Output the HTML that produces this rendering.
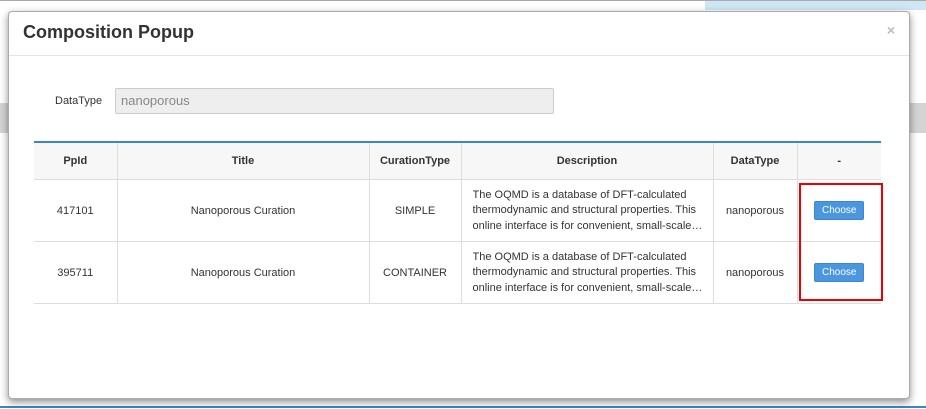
<!DOCTYPE html>
<html><head><style>
body{margin:0;width:926px;height:409px;overflow:hidden;background:#fff;font-family:"Liberation Sans",sans-serif;position:relative}
.bg{position:absolute}
.modal{position:absolute;left:8px;top:11px;width:900px;height:386px;background:#fff;border:1px solid #aaa;border-radius:4px;box-shadow:0 3px 8px rgba(0,0,0,.45)}
.hdr{height:43px;border-bottom:1px solid #e5e5e5;position:relative}
.hdr h4{margin:0;position:absolute;left:14px;top:10px;font-size:18px;font-weight:bold;color:#333}
.x{position:absolute;right:14px;top:10px;color:#bbb;font-size:14px;font-weight:bold}
.lbl{position:absolute;left:46px;top:83px;font-size:11px;color:#333}
.inp{position:absolute;left:106px;top:76px;height:26px;background:#eee;border:1px solid #ccc;border-radius:2px;font-size:13px;color:#888;line-height:24px;padding-left:5px;box-sizing:border-box;width:439px}
table{position:absolute;left:25px;top:129px;width:847px;table-layout:fixed;border-collapse:collapse;font-size:11px;color:#333;border-top:2px solid #3a87c8}
th{background:#f7f7f7;height:36px;font-weight:bold;border-right:1px solid #ddd;border-bottom:1px solid #ddd;padding:0}
td{height:61px;text-align:center;border-right:1px solid #ddd;border-bottom:1px solid #ddd;padding:0}
th:last-child,td:last-child{border-right:none}
td.d{text-align:left;padding:0 11px}
td.d div{line-height:15.5px;height:46px;overflow:hidden;white-space:nowrap}
.btn{display:inline-block;background:#4a97e0;color:#fff;font-size:10px;padding:3px 7px;border-radius:2px;border:1px solid #3c87cc}
.red{position:absolute;left:790px;top:171px;width:80px;height:114px;border:2px solid #e00}
</style></head><body>
<div class="bg" style="left:705px;top:0;width:221px;height:10px;background:#cfe6f5"></div>
<div class="bg" style="left:0;top:0;width:926px;height:1px;background:#aaa"></div>
<div class="bg" style="left:0;top:103px;width:926px;height:30px;background:#d4d4d4"></div>
<div class="bg" style="left:0;top:406px;width:926px;height:2px;background:#3a87c8"></div>
<div class="modal">
<div class="hdr"><h4>Composition Popup</h4><span class="x">×</span></div>
<div class="lbl">DataType</div>
<div class="inp">nanoporous</div>
<table>
<colgroup><col style="width:83px"><col style="width:252px"><col style="width:92px"><col style="width:252px"><col style="width:84px"><col style="width:84px"></colgroup>
<tr><th>PpId</th><th>Title</th><th>CurationType</th><th>Description</th><th>DataType</th><th>-</th></tr>
<tr><td>417101</td><td>Nanoporous Curation</td><td>SIMPLE</td><td class="d"><div>The OQMD is a database of DFT-calculated<br>thermodynamic and structural properties. This<br>online interface is for convenient, small-scale…</div></td><td>nanoporous</td><td><span class="btn">Choose</span></td></tr>
<tr><td>395711</td><td>Nanoporous Curation</td><td>CONTAINER</td><td class="d"><div>The OQMD is a database of DFT-calculated<br>thermodynamic and structural properties. This<br>online interface is for convenient, small-scale…</div></td><td>nanoporous</td><td><span class="btn">Choose</span></td></tr>
</table>
<div class="red"></div>
</div>
</body></html>
